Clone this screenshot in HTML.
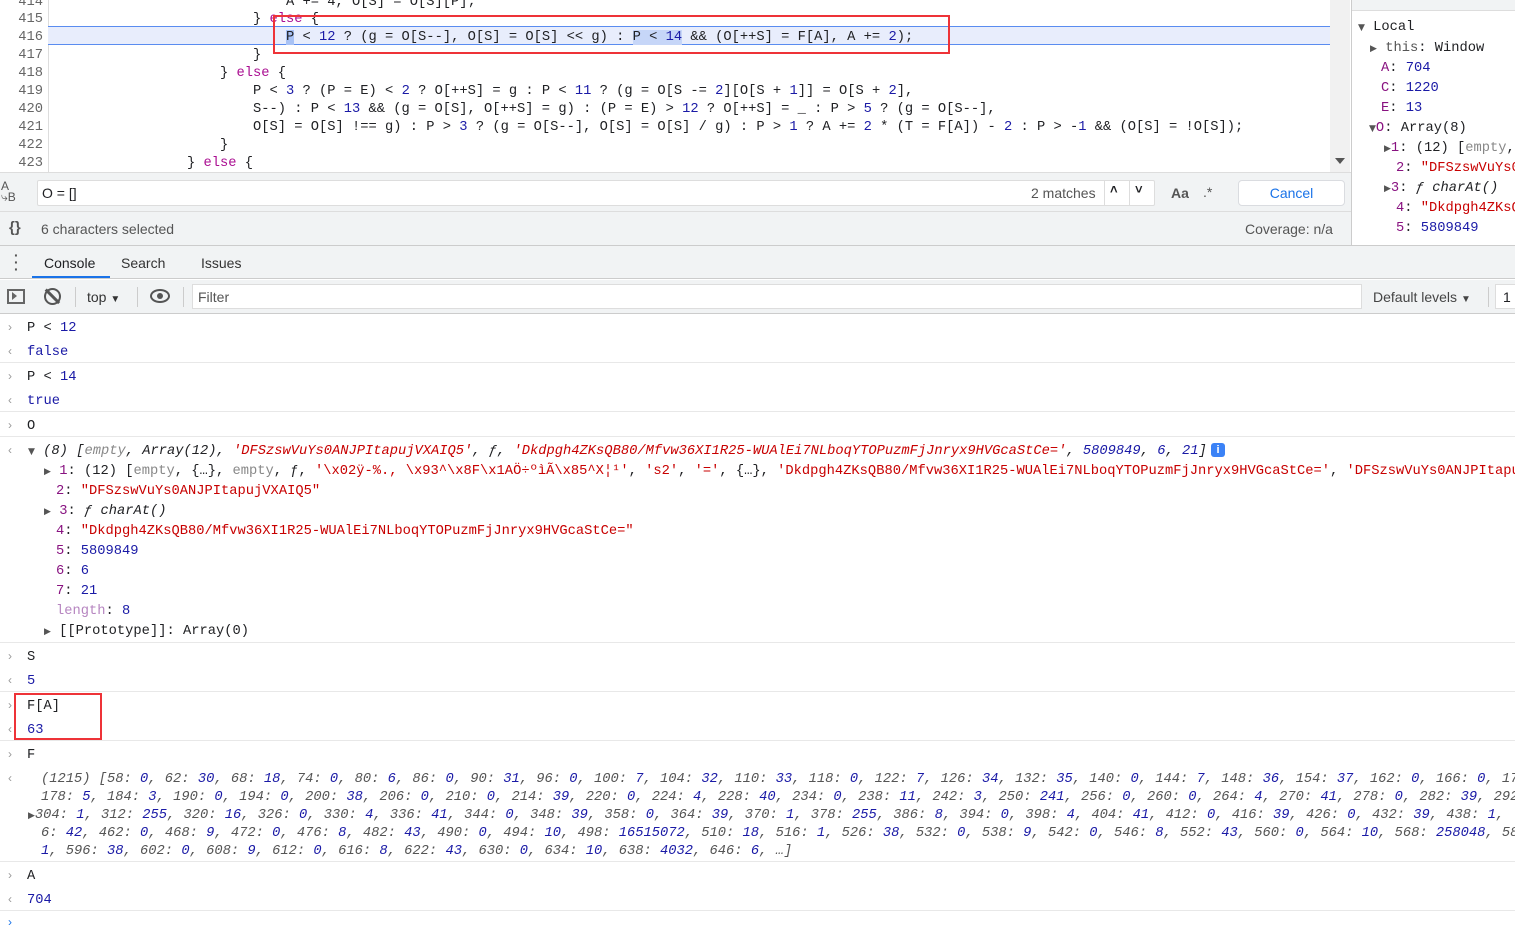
<!DOCTYPE html>
<html><head><meta charset="utf-8"><style>
*{margin:0;padding:0;box-sizing:border-box}
body{width:1515px;height:923px;overflow:hidden;background:#fff;position:relative;font-family:"Liberation Sans",sans-serif;font-size:14px;color:#202124}
.m{font-family:"Liberation Mono",monospace;font-size:13.75px;white-space:pre;position:absolute;line-height:18px;margin-top:2px}
.a{position:absolute}
.ln{color:#666;width:43px;text-align:right;left:0}
.n{color:#1a1aa6}.s{color:#c80000}.k{color:#881280}.kw{color:#aa0d91}.g{color:#888}.lp{color:#b685c0}
.i{font-style:italic}
.sep{position:absolute;left:0;width:1515px;height:1px;background:#e8e8e8}
.pr{position:absolute;left:8px;color:#999;font-size:12px;font-family:"Liberation Sans",sans-serif;margin-top:2px}
.tri{font-size:9px;color:#555;font-family:"DejaVu Sans",sans-serif}
</style></head><body>
<!-- code editor -->
<div class="a" style="left:0;top:0;width:1352px;height:172px;background:#fff"></div>
<div class="a" style="left:48px;top:0;width:1px;height:172px;background:#ddd"></div>
<div class="a" style="left:48px;top:26px;width:1282px;height:19px;background:#e8edfc;border-top:1px solid #5a8cf0;border-bottom:1px solid #5a8cf0"></div>
<div class="a" style="left:1330px;top:0;width:20px;height:172px;background:#f1f1f1"></div>
<div class="a" style="left:1335px;top:158px;border-left:5px solid transparent;border-right:5px solid transparent;border-top:6px solid #555"></div>
<div class="m ln" style="top:-8px">414</div><div class="m" style="top:-8px;left:286px">A += 4, O[S] = O[S][P];</div>
<div class="m ln" style="top:9px">415</div><div class="m" style="top:9px;left:253px">} <span class="kw">else</span> {</div>
<div class="m ln" style="top:27px">416</div><div class="m" style="top:27px;left:286px"><span style="background:#a8c2f5">P</span> &lt; <span class="n">12</span> ? (g = O[S--], O[S] = O[S] &lt;&lt; g) : <span style="background:#c6d6f8">P &lt; <span class="n">14</span></span> &amp;&amp; (O[++S] = F[A], A += <span class="n">2</span>);</div>
<div class="m ln" style="top:45px">417</div><div class="m" style="top:45px;left:253px">}</div>
<div class="m ln" style="top:63px">418</div><div class="m" style="top:63px;left:220px">} <span class="kw">else</span> {</div>
<div class="m ln" style="top:81px">419</div><div class="m" style="top:81px;left:253px">P &lt; <span class="n">3</span> ? (P = E) &lt; <span class="n">2</span> ? O[++S] = g : P &lt; <span class="n">11</span> ? (g = O[S -= <span class="n">2</span>][O[S + <span class="n">1</span>]] = O[S + <span class="n">2</span>],</div>
<div class="m ln" style="top:99px">420</div><div class="m" style="top:99px;left:253px">S--) : P &lt; <span class="n">13</span> &amp;&amp; (g = O[S], O[++S] = g) : (P = E) &gt; <span class="n">12</span> ? O[++S] = _ : P &gt; <span class="n">5</span> ? (g = O[S--],</div>
<div class="m ln" style="top:117px">421</div><div class="m" style="top:117px;left:253px">O[S] = O[S] !== g) : P &gt; <span class="n">3</span> ? (g = O[S--], O[S] = O[S] / g) : P &gt; <span class="n">1</span> ? A += <span class="n">2</span> * (T = F[A]) - <span class="n">2</span> : P &gt; -<span class="n">1</span> &amp;&amp; (O[S] = !O[S]);</div>
<div class="m ln" style="top:135px">422</div><div class="m" style="top:135px;left:220px">}</div>
<div class="m ln" style="top:153px">423</div><div class="m" style="top:153px;left:187px">} <span class="kw">else</span> {</div>
<div class="a" style="left:273px;top:15px;width:677px;height:39px;border:2px solid #ee3338"></div>
<!-- search bar -->
<div class="a" style="left:0;top:172px;width:1352px;height:73px;background:#f1f3f4;border-top:1px solid #ddd"></div>
<div class="a" style="left:1px;top:181px;font-size:12px;color:#555;line-height:11px">A<br>&#x2937;B</div>
<div class="a" style="left:37px;top:180px;width:1118px;height:26px;background:#fff;border:1px solid #ddd;border-radius:2px"></div>
<div class="a" style="left:42px;top:185px;font-size:14px">O = []</div>
<div class="a" style="left:1031px;top:185px;color:#555">2 matches</div>
<div class="a" style="left:1104px;top:180px;width:1px;height:26px;background:#ddd"></div>
<div class="a" style="left:1129px;top:180px;width:1px;height:26px;background:#ddd"></div>
<div class="a" style="left:1110px;top:182px;font-weight:bold;font-size:13px">&#x02C4;</div>
<div class="a" style="left:1135px;top:182px;font-weight:bold;font-size:13px">&#x02C5;</div>
<div class="a" style="left:1171px;top:185px;font-weight:bold;color:#555">Aa</div>
<div class="a" style="left:1203px;top:184px;color:#555">.*</div>
<div class="a" style="left:1238px;top:180px;width:107px;height:26px;background:#fff;border:1px solid #dadce0;border-radius:4px;color:#1a73e8;text-align:center;line-height:24px">Cancel</div>
<div class="a" style="left:0;top:211px;width:1352px;height:1px;background:#ddd"></div>
<div class="a" style="left:9px;top:219px;font-weight:bold;color:#555;font-size:15px">{}</div>
<div class="a" style="left:41px;top:221px;color:#555">6 characters selected</div>
<div class="a" style="left:1245px;top:221px;color:#555">Coverage: n/a</div>
<!-- scope -->
<div class="a" style="left:1351px;top:0;width:1px;height:245px;background:#ccc"></div>
<div class="a" style="left:1352px;top:0;width:163px;height:11px;background:#f1f3f4;border-bottom:1px solid #ddd"></div>
<div class="m" style="left:1358px;top:17px"><span class="tri">&#9660;</span> Local</div>
<div class="m" style="left:1370px;top:38px"><span class="tri">&#9654;</span> <span class="k" style="color:#555">this</span>: Window</div>
<div class="m" style="left:1381px;top:58px"><span class="k">A</span>: <span class="n">704</span></div>
<div class="m" style="left:1381px;top:78px"><span class="k">C</span>: <span class="n">1220</span></div>
<div class="m" style="left:1381px;top:98px"><span class="k">E</span>: <span class="n">13</span></div>
<div class="m" style="left:1369px;top:118px"><span class="tri">&#9660;</span><span class="k">O</span>: Array(8)</div>
<div class="m" style="left:1384px;top:138px"><span class="tri">&#9654;</span><span class="k">1</span>: (12) [<span class="g">empty</span>,</div>
<div class="m" style="left:1396px;top:158px"><span class="k">2</span>: <span class="s">"DFSzswVuYs0</span></div>
<div class="m" style="left:1384px;top:178px"><span class="tri">&#9654;</span><span class="k">3</span>: <span class="i">ƒ charAt()</span></div>
<div class="m" style="left:1396px;top:198px"><span class="k">4</span>: <span class="s">"Dkdpgh4ZKsQ</span></div>
<div class="m" style="left:1396px;top:218px"><span class="k">5</span>: <span class="n">5809849</span></div>
<div class="a" style="left:0;top:245px;width:1515px;height:1px;background:#ccc"></div>
<!-- tabs -->
<div class="a" style="left:0;top:246px;width:1515px;height:33px;background:#f1f3f4;border-bottom:1px solid #ccc"></div>
<div class="a" style="left:14px;top:252px;font-weight:bold;color:#555;line-height:7px;font-size:14px">·<br>·<br>·</div>
<div class="a" style="left:44px;top:255px">Console</div>
<div class="a" style="left:32px;top:276px;width:78px;height:2px;background:#1a73e8"></div>
<div class="a" style="left:121px;top:255px;color:#333">Search</div>
<div class="a" style="left:201px;top:255px;color:#333">Issues</div>
<!-- toolbar -->
<div class="a" style="left:0;top:280px;width:1515px;height:34px;background:#f1f3f4;border-bottom:1px solid #ccc"></div>
<div class="a" style="left:7px;top:289px;width:18px;height:15px;border:2px solid #666"></div>
<div class="a" style="left:12px;top:292px;border-top:4px solid transparent;border-bottom:4px solid transparent;border-left:5px solid #666"></div>
<div class="a" style="left:44px;top:288px;width:17px;height:17px;border:2.5px solid #555;border-radius:50%"></div>
<div class="a" style="left:51px;top:287px;width:2.5px;height:19px;background:#555;transform:rotate(-45deg)"></div>
<div class="a" style="left:75px;top:287px;width:1px;height:20px;background:#ccc"></div>
<div class="a" style="left:87px;top:289px;color:#333">top <span style="font-size:10px">&#9660;</span></div>
<div class="a" style="left:137px;top:287px;width:1px;height:20px;background:#ccc"></div>
<div class="a" style="left:150px;top:289px;width:20px;height:14px;border:2.5px solid #555;border-radius:50%"></div>
<div class="a" style="left:157px;top:293px;width:6px;height:6px;background:#555;border-radius:50%"></div>
<div class="a" style="left:183px;top:287px;width:1px;height:20px;background:#ccc"></div>
<div class="a" style="left:192px;top:284px;width:1170px;height:25px;background:#fff;border:1px solid #ddd"></div>
<div class="a" style="left:198px;top:289px;color:#555">Filter</div>
<div class="a" style="left:1373px;top:289px;color:#444">Default levels <span style="font-size:10px">&#9660;</span></div>
<div class="a" style="left:1488px;top:287px;width:1px;height:20px;background:#ccc"></div>
<div class="a" style="left:1495px;top:284px;width:30px;height:25px;background:#fff;border:1px solid #ddd;padding:4px 7px">1</div>
<!-- console -->
<div class="pr" style="top:318px">&#x203A;</div><div class="m" style="left:27px;top:318px">P &lt; <span class="n">12</span></div>
<div class="pr" style="top:342px">&#x2039;</div><div class="m n" style="left:27px;top:342px">false</div>
<div class="sep" style="top:362px"></div>
<div class="pr" style="top:367px">&#x203A;</div><div class="m" style="left:27px;top:367px">P &lt; <span class="n">14</span></div>
<div class="pr" style="top:391px">&#x2039;</div><div class="m n" style="left:27px;top:391px">true</div>
<div class="sep" style="top:411px"></div>
<div class="pr" style="top:416px">&#x203A;</div><div class="m" style="left:27px;top:416px">O</div>
<div class="sep" style="top:436px"></div>
<div class="pr" style="top:441px">&#x2039;</div>
<div class="m i" style="left:28px;top:441px"><span class="tri" style="font-style:normal">&#9660;</span> (8) [<span class="g">empty</span>, Array(12), <span class="s">'DFSzswVuYs0ANJPItapujVXAIQ5'</span>, ƒ, <span class="s">'Dkdpgh4ZKsQB80/Mfvw36XI1R25-WUAlEi7NLboqYTOPuzmFjJnryx9HVGcaStCe='</span>, <span class="n">5809849</span>, <span class="n">6</span>, <span class="n">21</span>]</div>
<div class="a" style="left:1211px;top:443px;width:14px;height:14px;background:#3b82f6;border-radius:3px;color:#fff;font-size:11px;text-align:center;line-height:14px;font-weight:bold">i</div>
<div class="m" style="left:44px;top:461px"><span class="tri">&#9654;</span> <span class="k">1</span>: (12) [<span class="g">empty</span>, {…}, <span class="g">empty</span>, ƒ, <span class="s">'\x02ÿ-%., \x93^\x8F\x1AÖ÷ºìÃ\x85^X¦¹'</span>, <span class="s">'s2'</span>, <span class="s">'='</span>, {…}, <span class="s">'Dkdpgh4ZKsQB80/Mfvw36XI1R25-WUAlEi7NLboqYTOPuzmFjJnryx9HVGcaStCe='</span>, <span class="s">'DFSzswVuYs0ANJPItapujVXAIQ5'</span></div>
<div class="m" style="left:56px;top:481px"><span class="k">2</span>: <span class="s">"DFSzswVuYs0ANJPItapujVXAIQ5"</span></div>
<div class="m" style="left:44px;top:501px"><span class="tri">&#9654;</span> <span class="k">3</span>: <span class="i">ƒ charAt()</span></div>
<div class="m" style="left:56px;top:521px"><span class="k">4</span>: <span class="s">"Dkdpgh4ZKsQB80/Mfvw36XI1R25-WUAlEi7NLboqYTOPuzmFjJnryx9HVGcaStCe="</span></div>
<div class="m" style="left:56px;top:541px"><span class="k">5</span>: <span class="n">5809849</span></div>
<div class="m" style="left:56px;top:561px"><span class="k">6</span>: <span class="n">6</span></div>
<div class="m" style="left:56px;top:581px"><span class="k">7</span>: <span class="n">21</span></div>
<div class="m" style="left:56px;top:601px"><span class="lp">length</span>: <span class="n">8</span></div>
<div class="m" style="left:44px;top:621px"><span class="tri">&#9654;</span> [[Prototype]]: Array(0)</div>
<div class="sep" style="top:642px"></div>
<div class="pr" style="top:647px">&#x203A;</div><div class="m" style="left:27px;top:647px">S</div>
<div class="pr" style="top:671px">&#x2039;</div><div class="m n" style="left:27px;top:671px">5</div>
<div class="sep" style="top:691px"></div>
<div class="pr" style="top:696px">&#x203A;</div><div class="m" style="left:27px;top:696px">F[A]</div>
<div class="pr" style="top:720px">&#x2039;</div><div class="m n" style="left:27px;top:720px">63</div>
<div class="a" style="left:14px;top:693px;width:88px;height:47px;border:2px solid #ee3338"></div>
<div class="sep" style="top:740px"></div>
<div class="pr" style="top:745px">&#x203A;</div><div class="m" style="left:27px;top:745px">F</div>
<div class="pr" style="top:769px">&#x2039;</div>
<div class="m i" style="left:41px;top:769px;color:#555">(1215) [58: <span class="n">0</span>, 62: <span class="n">30</span>, 68: <span class="n">18</span>, 74: <span class="n">0</span>, 80: <span class="n">6</span>, 86: <span class="n">0</span>, 90: <span class="n">31</span>, 96: <span class="n">0</span>, 100: <span class="n">7</span>, 104: <span class="n">32</span>, 110: <span class="n">33</span>, 118: <span class="n">0</span>, 122: <span class="n">7</span>, 126: <span class="n">34</span>, 132: <span class="n">35</span>, 140: <span class="n">0</span>, 144: <span class="n">7</span>, 148: <span class="n">36</span>, 154: <span class="n">37</span>, 162: <span class="n">0</span>, 166: <span class="n">0</span>, 17</div>
<div class="m i" style="left:41px;top:787px;color:#555">178: <span class="n">5</span>, 184: <span class="n">3</span>, 190: <span class="n">0</span>, 194: <span class="n">0</span>, 200: <span class="n">38</span>, 206: <span class="n">0</span>, 210: <span class="n">0</span>, 214: <span class="n">39</span>, 220: <span class="n">0</span>, 224: <span class="n">4</span>, 228: <span class="n">40</span>, 234: <span class="n">0</span>, 238: <span class="n">11</span>, 242: <span class="n">3</span>, 250: <span class="n">241</span>, 256: <span class="n">0</span>, 260: <span class="n">0</span>, 264: <span class="n">4</span>, 270: <span class="n">41</span>, 278: <span class="n">0</span>, 282: <span class="n">39</span>, 292</div>
<div class="m i" style="left:28px;top:805px;color:#555"><span class="tri" style="font-style:normal">&#9654;</span>304: <span class="n">1</span>, 312: <span class="n">255</span>, 320: <span class="n">16</span>, 326: <span class="n">0</span>, 330: <span class="n">4</span>, 336: <span class="n">41</span>, 344: <span class="n">0</span>, 348: <span class="n">39</span>, 358: <span class="n">0</span>, 364: <span class="n">39</span>, 370: <span class="n">1</span>, 378: <span class="n">255</span>, 386: <span class="n">8</span>, 394: <span class="n">0</span>, 398: <span class="n">4</span>, 404: <span class="n">41</span>, 412: <span class="n">0</span>, 416: <span class="n">39</span>, 426: <span class="n">0</span>, 432: <span class="n">39</span>, 438: <span class="n">1</span>,</div>
<div class="m i" style="left:41px;top:823px;color:#555">6: <span class="n">42</span>, 462: <span class="n">0</span>, 468: <span class="n">9</span>, 472: <span class="n">0</span>, 476: <span class="n">8</span>, 482: <span class="n">43</span>, 490: <span class="n">0</span>, 494: <span class="n">10</span>, 498: <span class="n">16515072</span>, 510: <span class="n">18</span>, 516: <span class="n">1</span>, 526: <span class="n">38</span>, 532: <span class="n">0</span>, 538: <span class="n">9</span>, 542: <span class="n">0</span>, 546: <span class="n">8</span>, 552: <span class="n">43</span>, 560: <span class="n">0</span>, 564: <span class="n">10</span>, 568: <span class="n">258048</span>, 58</div>
<div class="m i" style="left:41px;top:841px;color:#555"><span class="n">1</span>, 596: <span class="n">38</span>, 602: <span class="n">0</span>, 608: <span class="n">9</span>, 612: <span class="n">0</span>, 616: <span class="n">8</span>, 622: <span class="n">43</span>, 630: <span class="n">0</span>, 634: <span class="n">10</span>, 638: <span class="n">4032</span>, 646: <span class="n">6</span>, …]</div>
<div class="sep" style="top:861px"></div>
<div class="pr" style="top:866px">&#x203A;</div><div class="m" style="left:27px;top:866px">A</div>
<div class="pr" style="top:890px">&#x2039;</div><div class="m n" style="left:27px;top:890px">704</div>
<div class="sep" style="top:910px"></div>
<div class="pr" style="top:913px;color:#1a73e8">&#x203A;</div>
</body></html>
